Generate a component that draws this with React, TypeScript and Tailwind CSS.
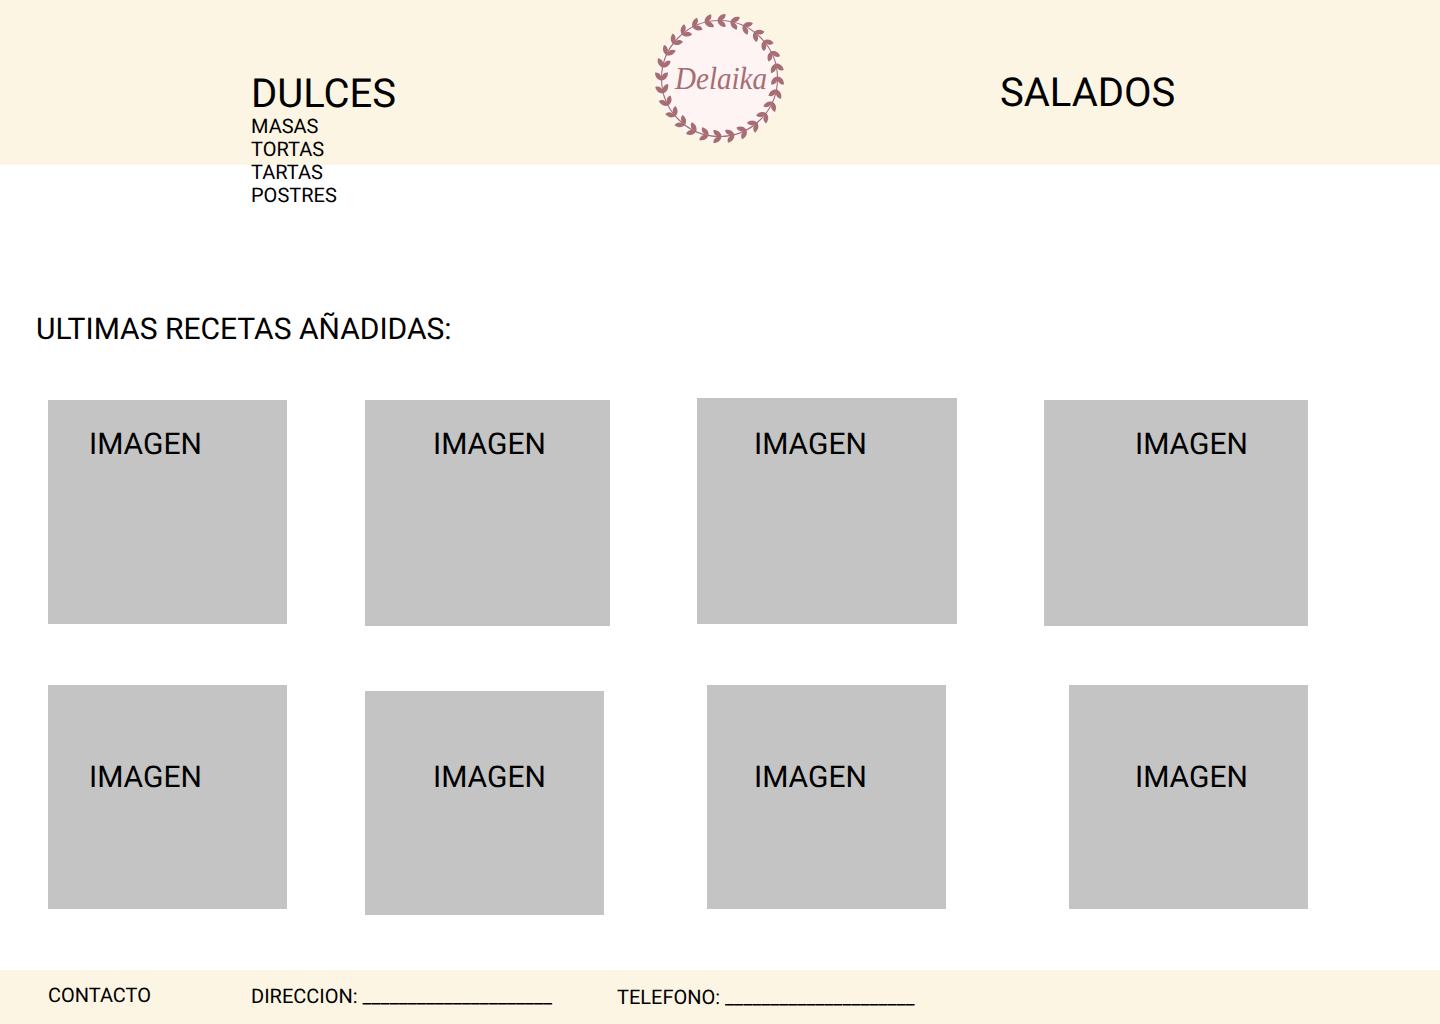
const cream = "bg-[#fcf5e3]";

const leafCount = 28;
const leaves = Array.from({ length: leafCount }, (_, i) => (i * 360) / leafCount);

function Logo() {
  return (
    <svg width="129" height="129" viewBox="0 0 129 129" className="block">
      <circle cx="64.5" cy="64.5" r="63" fill="#fdf4f3" />
      <circle cx="64.5" cy="64.5" r="58" fill="none" stroke="#a66d73" strokeWidth="1.1" />
      {leaves.map((angle) => (
        <g key={angle} transform={`rotate(${angle} 64.5 64.5)`} fill="#a66d73">
          <path d="M62.5 6.5 C 63 2.5 66 0 70.5 0 C 71 4 68 7 62.5 6.5 Z" />
          <path d="M62.5 6.5 C 63 10.5 66 13 70.5 13 C 71 9 68 6 62.5 6.5 Z" />
        </g>
      ))}
      <text
        x="66"
        y="75"
        textAnchor="middle"
        fill="#a66d73"
        fontSize="32"
        fontStyle="italic"
        fontFamily="'Liberation Serif', serif"
        textLength="92"
        lengthAdjust="spacingAndGlyphs"
      >
        Delaika
      </text>
    </svg>
  );
}

const firstRow = [
  { box: "ml-[48px] mt-[2px] h-[224px] w-[239px] pl-[41px] pt-[27px]" },
  { box: "ml-[78px] mt-[2px] h-[226px] w-[245px] pl-[68px] pt-[27px]" },
  { box: "ml-[87px] h-[226px] w-[260px] pl-[57px] pt-[29px]" },
  { box: "ml-[87px] mt-[2px] h-[226px] w-[264px] pl-[91px] pt-[27px]" },
];

const secondRow = [
  { box: "ml-[48px] h-[224px] w-[239px] pl-[41px] pt-[75px]" },
  { box: "ml-[78px] mt-[6px] h-[224px] w-[239px] pl-[68px] pt-[69px]" },
  { box: "ml-[103px] h-[224px] w-[239px] pl-[47px] pt-[75px]" },
  { box: "ml-[123px] h-[224px] w-[239px] pl-[66px] pt-[75px]" },
];

function ImageBox({ box }: { box: string }) {
  return <div className={`shrink-0 bg-[#c4c4c4] text-[30px] leading-[35px] ${box}`}>IMAGEN</div>;
}

export default function App() {
  return (
    <div className="flex h-[1024px] w-[1440px] flex-col overflow-hidden bg-white font-['Roboto',sans-serif] text-black antialiased [text-rendering:geometricPrecision]">
      <header className={`flex h-[165px] shrink-0 ${cream}`}>
        <div className="ml-[251px] w-[404px] pt-[75px]">
          <h2 className="text-[40px] leading-[38px]">DULCES</h2>
          <ul className="mt-[2px] text-[20px] leading-[23px]">
            <li>MASAS</li>
            <li>TORTAS</li>
            <li>TARTAS</li>
            <li>POSTRES</li>
          </ul>
        </div>
        <div className="pt-[14px]">
          <Logo />
        </div>
        <div className="ml-[216px] pt-[74px]">
          <h2 className="text-[40px] leading-[38px]">SALADOS</h2>
        </div>
      </header>

      <h1 className="ml-[36px] mt-[147px] text-[30px] leading-[35px]">ULTIMAS RECETAS AÑADIDAS:</h1>

      <section className="mt-[51px] flex">
        {firstRow.map((item) => (
          <ImageBox key={item.box} box={item.box} />
        ))}
      </section>

      <section className="mt-[59px] flex">
        {secondRow.map((item) => (
          <ImageBox key={item.box} box={item.box} />
        ))}
      </section>

      <footer className={`mt-auto flex h-[54px] shrink-0 text-[20px] leading-[23px] ${cream}`}>
        <span className="ml-[48px] mt-[14px] w-[203px]">CONTACTO</span>
        <span className="mt-[15px] w-[366px]">DIRECCION: _____________________</span>
        <span className="mt-[16px]">TELEFONO: _____________________</span>
      </footer>
    </div>
  );
}
